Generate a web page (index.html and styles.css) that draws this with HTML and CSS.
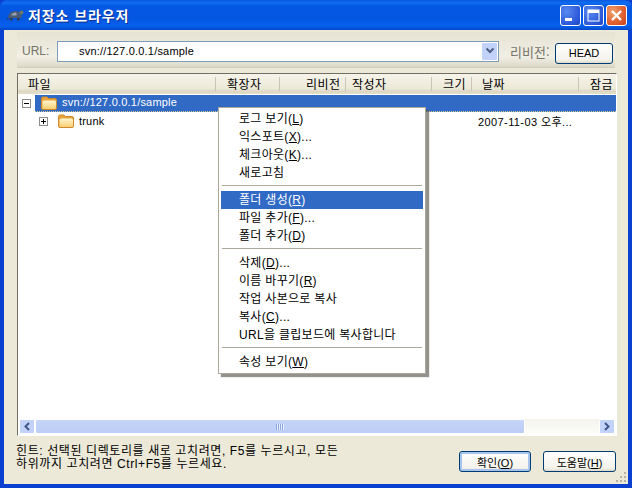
FILE: index.html
```html
<!DOCTYPE html>
<html lang="ko">
<head>
<meta charset="utf-8">
<title>저장소 브라우저</title>
<link rel="stylesheet" href="styles.css">
</head>
<body>
<svg class="defs" width="0" height="0">
  <defs>
    <linearGradient id="fold" x1="0" y1="0" x2="0" y2="1"><stop offset="0" stop-color="#fff6cf"/><stop offset="1" stop-color="#f8cf72"/></linearGradient>
    <symbol id="folder" viewBox="0 0 16 14">
      <path d="M.5 12.500V2.500q0-1.500 1.500-1.500h4l1.500 1.500h6.500q1.500 0 1.500 1.500v8.500q0 1-1.500 1H2q-1.500 0-1.500-1z" fill="#e9a338" stroke="#cf8a2e"/>
      <path d="M1.500 12V6q0-1.500 1.500-1.500h10.500q1.500 0 1.500 1.500v6q0 1-1.500 1H3q-1.500 0-1.500-1z" fill="url(#fold)"/>
    </symbol>
  </defs>
</svg>
<div class="window">
  <header class="titlebar">
    <svg class="turtle" width="17" height="12" viewBox="0 0 17 12">
      <path d="M1 9Q2 2 8 2t7 5l-1 2z" fill="#4a5a72"/>
      <path d="M4 6q2-3 5-2.500L10 6q-3 1-6 0z" fill="#98a2b2"/>
      <circle cx="14.500" cy="3.500" r="2" fill="#6b7a6a"/>
      <path d="M3 9h2.500v2.500H3zM10 9h2.500v2.500H10zM1 8 0 11h1.500z" fill="#2c3a54"/>
    </svg>
    <h1 class="title">저장소 브라우저</h1>
    <div class="controls">
      <span class="ctl"><svg width="21" height="21" viewBox="0 0 21 21"><rect x="5" y="13" width="7" height="3" fill="#fff"/></svg></span>
      <span class="ctl"><svg width="21" height="21" viewBox="0 0 21 21"><rect x="5" y="5" width="11" height="11" fill="none" stroke="#fff"/><rect x="5" y="5" width="11" height="3" fill="#fff"/></svg></span>
      <span class="ctl close"><svg width="21" height="21" viewBox="0 0 21 21"><path d="M6 6l9 9M15 6l-9 9" stroke="#fff" stroke-width="2.400"/></svg></span>
    </div>
  </header>
  <main class="body">
    <div class="urlbar">
      <span class="label url-label">URL:</span>
      <div class="combo">
        <span class="combo-text">svn://127.0.0.1/sample</span>
        <span class="combo-btn"><svg width="10" height="8" viewBox="0 0 10 8"><path d="M1.500 1.500 5 5l3.500-3.500" fill="none" stroke="#4d6185" stroke-width="2"/></svg></span>
      </div>
      <span class="label rev-label">리비전:</span>
      <button class="btn head-btn" type="button">HEAD</button>
    </div>
    <section class="panel">
      <div class="cols head">
        <span class="h h-file">파일</span>
        <span class="h h-ext">확장자</span>
        <span class="h h-rev">리비전</span>
        <span class="h h-author">작성자</span>
        <span class="h h-size">크기</span>
        <span class="h h-date">날짜</span>
        <span class="h h-lock">잠금</span>
      </div>
      <div class="tree">
        <div class="row root">
          <span class="toggle"></span>
          <svg class="folder" width="16" height="14"><use href="#folder"/></svg>
          <span class="sel">svn://127.0.0.1/sample</span>
        </div>
        <div class="row child cols">
          <span class="name">
            <span class="toggle plus"></span>
            <svg class="folder" width="16" height="14"><use href="#folder"/></svg>
            <span>trunk</span>
          </span>
          <span class="date">2007-11-03 오후...</span>
        </div>
      </div>
      <div class="hscroll">
        <span class="arrow"><svg width="8" height="9" viewBox="0 0 8 9"><path d="M6 1 2.500 4.500 6 8" fill="none" stroke="#3f5a8a" stroke-width="2"/></svg></span>
        <span class="track"><span class="thumb"><span class="grip"></span></span></span>
        <span class="arrow"><svg width="8" height="9" viewBox="0 0 8 9"><path d="M2 1l3.500 3.500L2 8" fill="none" stroke="#3f5a8a" stroke-width="2"/></svg></span>
      </div>
    </section>
    <footer class="foot">
      <p class="hint">힌트: 선택된 디렉토리를 새로 고치려면, F5를 누르시고, 모든<br>하위까지 고치려면 Ctrl+F5를 누르세요.</p>
      <button class="btn ok" type="button">확인(<u>O</u>)</button>
      <button class="btn help" type="button">도움말(<u>H</u>)</button>
    </footer>
  </main>
  <svg class="gripper" width="11" height="11" viewBox="0 0 11 11" fill="#b5b1a0">
    <rect x="8" y="0" width="2" height="2"/><rect x="4" y="4" width="2" height="2"/><rect x="8" y="4" width="2" height="2"/><rect x="0" y="8" width="2" height="2"/><rect x="4" y="8" width="2" height="2"/><rect x="8" y="8" width="2" height="2"/>
  </svg>
</div>
<nav class="menu">
  <div class="item">로그 보기(<u>L</u>)</div>
  <div class="item">익스포트(<u>X</u>)...</div>
  <div class="item">체크아웃(<u>K</u>)...</div>
  <div class="item">새로고침</div>
  <div class="sep"></div>
  <div class="item active">폴더 생성(<u>R</u>)</div>
  <div class="item">파일 추가(<u>F</u>)...</div>
  <div class="item">폴더 추가(<u>D</u>)</div>
  <div class="sep"></div>
  <div class="item">삭제(<u>D</u>)...</div>
  <div class="item">이름 바꾸기(<u>R</u>)</div>
  <div class="item">작업 사본으로 복사</div>
  <div class="item">복사(<u>C</u>)...</div>
  <div class="item">URL을 클립보드에 복사합니다</div>
  <div class="sep"></div>
  <div class="item">속성 보기(<u>W</u>)</div>
</nav>
</body>
</html>
```
FILE: styles.css
```css
* { box-sizing: border-box; }
html, body { margin: 0; padding: 0; }
body {
  width: 632px;
  height: 488px;
  overflow: hidden;
  position: relative;
  background: #0a3fd0;
  font-family: "Liberation Sans", "Noto Sans CJK KR", sans-serif;
  font-size: 11px;
  color: #000;
}
.defs { position: absolute; }
.window {
  width: 632px;
  height: 488px;
  display: flex;
  flex-direction: column;
  position: relative;
  border-radius: 7px 7px 0 0;
  overflow: hidden;
  background: #0a3fd0;
}
.titlebar {
  height: 30px;
  flex: none;
  display: flex;
  align-items: center;
  padding: 0 5px 0 7px;
  background: linear-gradient(#0a5ae0 0, #0f6df0 3px, #0358e4 6px, #0356e0 18px, #0660ee 26px, #0348c8 30px);
}
.turtle { flex: none; margin-right: 4px; }
.title {
  margin: 0;
  font: bold 14px "Noto Sans CJK KR", sans-serif;
  color: #fff;
  text-shadow: 1px 1px #0f2f90;
  letter-spacing: .9px;
  flex: 1;
}
.controls { display: flex; gap: 2px; }
.ctl {
  width: 21px;
  height: 21px;
  border: 1px solid #fff;
  border-radius: 3px;
  background: radial-gradient(circle at 30% 30%, #5a8af0, #2a58d8 70%, #1f46c0);
  display: block;
  overflow: hidden;
}
.ctl svg { display: block; margin: -1px; }
.close { background: radial-gradient(circle at 30% 30%, #f0a070, #e06030 60%, #c8401c); }
.body {
  flex: 1;
  margin: 0 4px 4px;
  background: #ece9d8;
  display: flex;
  flex-direction: column;
  padding: 2px 12px 0 12px;
  min-height: 0;
}
.urlbar {
  height: 36px;
  flex: none;
  margin: 0 1px;
  padding: 3px 0 0 5px;
  display: flex;
  align-items: center;
  background: linear-gradient(#e6e3d3, #f1efe5 70%, #dcd9c8);
  border-bottom: 1px solid #d0cdbc;
}
.label { color: #76746a; font-size: 13px; }
.url-label { width: 35px; flex: none; font-size: 12px; }
.combo {
  width: 442px;
  height: 21px;
  flex: none;
  border: 1px solid #7f9db9;
  background: #fff;
  display: flex;
  align-items: center;
  justify-content: space-between;
  padding: 1px;
}
.combo-text { padding-left: 20px; font-size: 11px; letter-spacing: .2px; }
.combo-btn {
  width: 15px;
  height: 17px;
  background: #c3d2f8;
  border-radius: 1px;
  display: flex;
  align-items: center;
  justify-content: center;
}
.rev-label { margin-left: 11px; width: 45px; flex: none; font-family: "Noto Sans CJK KR", sans-serif; font-size: 13px; white-space: nowrap; }
.btn {
  border: 1px solid #003c74;
  border-radius: 3px;
  background: linear-gradient(#fff, #f3f2ea 85%, #dcd8c8);
  font-family: "Liberation Sans", "Noto Sans CJK KR", sans-serif;
  font-size: 11px;
  color: #000;
  padding: 0;
  height: 21px;
}
.head-btn { width: 58px; margin-top: 4px; }
.panel {
  flex: none;
  height: 363px;
  margin: 5px 0 0 1px;
  width: 600px;
  background: #fff;
  border: 1px solid;
  border-color: #716f64 #fff #fff #716f64;
  display: flex;
  flex-direction: column;
}
.cols {
  display: grid;
  grid-template-columns: 198px 64px 66px 86px 40px 107px 37px;
}
.head {
  height: 20px;
  flex: none;
  background: linear-gradient(#f6f4ea, #ece9d8 80%, #d8d4c0);
  border-bottom: 2px solid #e0dcc8;
  font-family: "Noto Sans CJK KR", sans-serif;
  font-size: 12px;
  letter-spacing: .5px;
}
.h {
  height: 14px;
  margin-top: 3px;
  line-height: 14px;
  border-right: 1px solid #c8c5b2;
  white-space: nowrap;
}
.h-file { padding-left: 10px; }
.h-ext { padding-left: 11px; }
.h-rev { padding-left: 26px; }
.h-author { padding-left: 6px; }
.h-size { padding-left: 11px; }
.h-date { padding-left: 10px; }
.h-lock { padding-left: 11px; border-right: 0; }
.tree { flex: 1; padding-top: 1px; min-height: 0; }
.row { height: 18px; display: flex; align-items: center; font-size: 11px; letter-spacing: .2px; }
.root { height: 17px; padding-left: 4px; position: relative; }
.toggle {
  width: 9px;
  height: 9px;
  flex: none;
  border: 1px solid #8c8c8c;
  background: linear-gradient(#000, #000) center / 5px 1px no-repeat, #fff;
}
.plus {
  background:
    linear-gradient(#000, #000) center / 5px 1px no-repeat,
    linear-gradient(#000, #000) center / 1px 5px no-repeat,
    #fff;
}
.folder { flex: none; }
.root .folder { margin-left: 10px; margin-top: -1px; position: relative; z-index: 1; }
.sel {
  flex: 1;
  height: 17px;
  line-height: 15px;
  color: #fff;
  padding-left: 27px;
  margin-left: -22px;
  background: #316ac5;
  border-bottom: 1px dotted #d8c890;
}
.child { display: grid; }
.name { display: flex; align-items: center; padding-left: 21px; }
.name .folder { margin: -1px 5px 0 10px; }
.date { grid-column: 5 / 7; padding-left: 46px; white-space: nowrap; letter-spacing: .4px; }
.hscroll {
  height: 15px;
  flex: none;
  margin: 0 1px 1px 1px;
  display: flex;
  background: linear-gradient(#f4f3ec, #fdfdfa);
}
.arrow {
  width: 16px;
  flex: none;
  background: #c3d2f8;
  border: 1px solid #fff;
  border-radius: 2px;
  display: flex;
  align-items: center;
  justify-content: center;
}
.track { flex: 1; display: block; }
.thumb {
  display: flex;
  width: 490px;
  height: 15px;
  margin-left: 0;
  border: 1px solid #fff;
  border-radius: 2px;
  background: linear-gradient(#c6d5f8, #bccdf6);
  align-items: center;
  justify-content: center;
}
.grip {
  width: 8px;
  height: 6px;
  background: repeating-linear-gradient(90deg, #8ea7dc 0 1px, #e8eefc 1px 2px);
}
.foot {
  flex: 1;
  display: flex;
  align-items: flex-start;
  min-height: 0;
}
.hint {
  margin: 9px 0 0;
  width: 443px;
  flex: none;
  font-size: 12px;
  line-height: 13px;
  letter-spacing: .6px;
}
.ok { width: 72px; margin-top: 15px; box-shadow: inset 0 0 0 2px #a8c4ec; }
.help { width: 73px; margin: 15px 0 0 12px; }
.gripper { position: absolute; right: 5px; bottom: 5px; }
.menu {
  position: absolute;
  left: 218px;
  top: 107px;
  width: 208px;
  height: 267px;
  background: #fff;
  border: 1px solid #aca899;
  padding: 2px 2px;
  box-shadow: 3px 3px 1px rgba(90, 88, 78, .65);
  font-size: 12px;
  letter-spacing: .3px;
}
.item { height: 18px; line-height: 18px; padding-left: 18px; white-space: nowrap; }
.active { background: #316ac5; color: #fff; }
.sep { height: 9px; padding: 3px 1px 5px; }
.sep::before { content: ""; display: block; height: 1px; background: #aca899; }
```
